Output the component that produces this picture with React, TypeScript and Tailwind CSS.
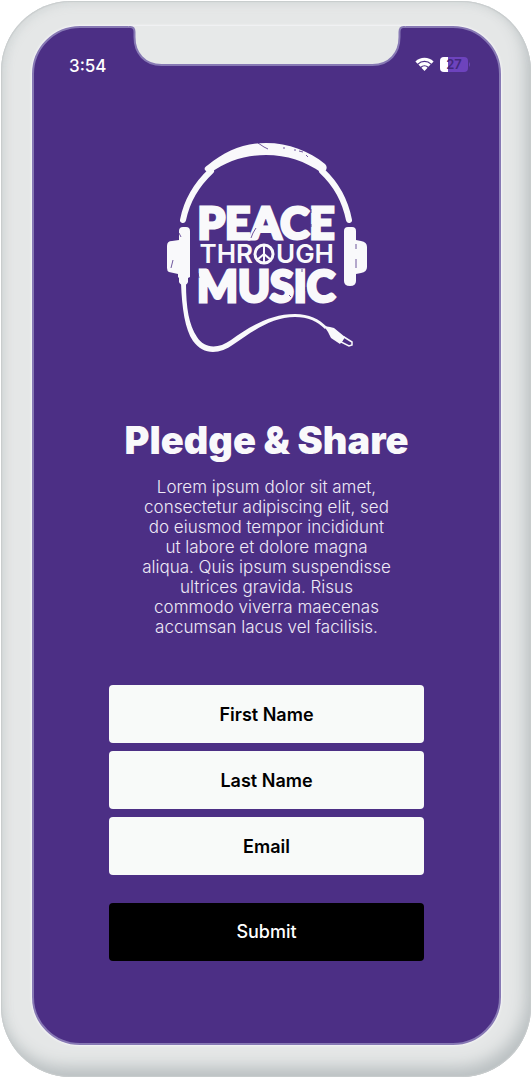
import React from 'react';

interface FieldProps {
  id: string;
  label: string;
  type?: string;
}

const Notch = () => (
  <svg
    className="absolute -top-[2px] left-1/2 -translate-x-1/2"
    width="277"
    height="42"
    viewBox="0 0 277 42"
    fill="none"
    aria-hidden="true"
  >
    <path
      d="M0 0 H277 V1 H275 Q271 1 271 6 V11 C271 27 261 39 244 39 H33 C16 39 6 27 6 11 V6 Q6 1 2 1 H0Z"
      fill="#e7e9e9"
    />
    <path
      d="M0 1 H2 Q6 1 6 6 V11 C6 27 16 39 33 39 H244 C261 39 271 27 271 11 V6 Q271 1 275 1 H277"
      stroke="#8779b4"
      strokeWidth="2"
    />
  </svg>
);

const StatusBar = () => (
  <div className="flex items-center justify-between pl-[35px] pr-7 pt-[26px]">
    <span className="font-['Inter',sans-serif] text-[17px] font-medium leading-6 text-white">3:54</span>
    <div className="flex items-center gap-1.5 pb-1">
      <svg width="19" height="14" viewBox="0 0 19 14" aria-hidden="true">
        <path
          d="M.4 4.4a13 13 0 0 1 18.200 0l-2.100 2.300a10 10 0 0 0-14 0ZM3.400 7.600a8.700 8.700 0 0 1 12.200 0l-2.100 2.200a5.700 5.700 0 0 0-8 0ZM6.400 10.700a4.500 4.500 0 0 1 6.200 0L9.500 14Z"
          fill="#fff"
        />
      </svg>
      <svg width="31" height="15" viewBox="0 0 31 15" role="img" aria-label="Battery 27%">
        <rect width="28" height="15" rx="4" fill="#6d43bd" />
        <path d="M4 0H8V15H4A4 4 0 0 1 0 11V4A4 4 0 0 1 4 0Z" fill="#fff" />
        <path d="M29 5q2 2.500 0 5Z" fill="#6d43bd" />
        <text
          x="14"
          y="12"
          textAnchor="middle"
          fontFamily="Inter, sans-serif"
          fontSize="13"
          fontWeight="600"
          fill="#43287c"
        >
          27
        </text>
      </svg>
    </div>
  </div>
);

const Logo = () => (
  <svg width="204" height="216" viewBox="0 0 204 216" role="img" aria-label="Peace Through Music">
    {/* headband */}
    <g fill="none" stroke="#f9f9fb" strokeLinecap="round" strokeWidth="6">
      <path d="M18 80C22 60 31 45 46 31" />
      <path d="M184 80C180 60 171 44 157 31" />
    </g>
    <path
      d="M40 30C39 28 40 27 43 25C60 11 79 3 101 3C124 3 144 11 160 24C162 26 162 28 161 30L157 33C140 21 122 15 101 15C80 15 62 21 45 33L42 32Z"
      fill="#f9f9fb"
    />
    {/* ear cups */}
    <path
      d="M14 91Q14 87 18 87H21Q25 87 25 91V137L23 138V142Q22 145 19 145Q15 145 14 142L14 138L13 137V134L4 132Q2 131 2 128V106Q2 101 7 101L14 100Z"
      fill="#f9f9fb"
    />
    <path
      d="M179 91Q179 87 183 87H187Q191 87 191 91V100L196 101Q202 102 202 107V127Q202 132 196 133L191 134V141Q191 146 185 146Q179 146 179 141Z"
      fill="#f9f9fb"
    />
    {/* cable and plug */}
    <path
      d="M16 143H21C21 168 24 185 32 197C39 208 52 210 66 200C84 187 105 174 130 174C144 174 154 179 162 187L160 189C152 181 143 177 130 177C108 177 89 190 69 204C54 215 38 215 28 201C20 189 17 169 16 143Z"
      fill="#f9f9fb"
    />
    <path d="M159 186L165 187L169 188L180 197L175 204L166 198L163 192Z" fill="#f9f9fb" />
    <path d="M179 197L187 202V205L184 206L176 202Z" fill="none" stroke="#f9f9fb" strokeWidth="1.500" />
    {/* lettering */}
    <g
      fill="#f9f9fb"
      stroke="#f9f9fb"
      strokeWidth="3"
      textAnchor="middle"
      fontFamily="Lato, sans-serif"
      fontWeight="900"
    >
      <text x="101" y="99" fontSize="44">PEACE</text>
      <text x="101" y="162" fontSize="43">MUSIC</text>
    </g>
    <g fill="#f9f9fb" fontFamily="Inter, sans-serif" fontWeight="600" fontSize="26">
      <text x="88" y="123" textAnchor="end">THR</text>
      <text x="111" y="123">UGH</text>
    </g>
    <g fill="none" stroke="#f9f9fb">
      <circle cx="99" cy="114" r="9" strokeWidth="3" />
      <path d="M99 105V123M99 114L92 120M99 114L106 120" strokeWidth="2" />
    </g>
    {/* scratches */}
    <g fill="none" stroke="#4c2f85" strokeWidth="0.800">
      <path d="M93 3L99 7L103 9M118 8H120M129 10H131M134 11L138 12M141 15L143 17" />
      <path d="M86 98L88 93L91 88M146 69V73M146 84V87M14 93L16 97M6 128L8 120M191 104V109M191 119V128" />
      <path d="M33 133L34 138M137 129V132M124 155L126 157M141 147V151" />
    </g>
  </svg>
);

const Field = ({ id, label, type = 'text' }: FieldProps) => (
  <input
    id={id}
    name={id}
    type={type}
    aria-label={label}
    placeholder={label}
    className="block h-[58px] w-full rounded bg-[#f8faf9] px-4 text-center text-lg font-semibold text-black placeholder:text-black placeholder:opacity-100"
  />
);

const App = () => {
  return (
    <main className="p-px font-['Inter',sans-serif]">
      <div className="rounded-[70px] bg-[#e5e7e7] pb-8 pl-[31px] pr-[30px] pt-[25px] shadow-[inset_0_0_1px_1px_#c8cccd,inset_-5px_-10px_16px_#b9bfc1,inset_4px_4px_10px_#d9dddd]">
        <div className="relative rounded-[48px] border-2 border-[#8779b4] bg-[#4c2f85] pb-[82px] shadow-[0_0_2px_1px_#f5f5f7]">
          <Notch />
          <StatusBar />
          <div className="px-[75px] text-center">
            <div className="flex justify-center pt-[62px]">
              <Logo />
            </div>
            <h1 className="-mx-6 mt-[60px] whitespace-nowrap text-[38px] font-black leading-12 text-[#f9f9fb]">
              Pledge &amp; Share
            </h1>
            <p className="-mx-2 mt-[13px] whitespace-nowrap text-[17px] font-light leading-5 text-[#eeeaf6]">
              Lorem ipsum dolor sit amet,<br />
              consectetur adipiscing elit, sed<br />
              do eiusmod tempor incididunt<br />
              ut labore et dolore magna<br />
              aliqua. Quis ipsum suspendisse<br />
              ultrices gravida. Risus<br />
              commodo viverra maecenas<br />
              accumsan lacus vel facilisis.
            </p>
            <form className="mt-12 flex flex-col gap-2" onSubmit={(e) => e.preventDefault()}>
              <Field id="firstName" label="First Name" />
              <Field id="lastName" label="Last Name" />
              <Field id="email" label="Email" type="email" />
              <button
                type="submit"
                className="mt-5 h-[58px] rounded bg-black text-lg font-medium text-white"
              >
                Submit
              </button>
            </form>
          </div>
        </div>
      </div>
    </main>
  );
};

export default App;
